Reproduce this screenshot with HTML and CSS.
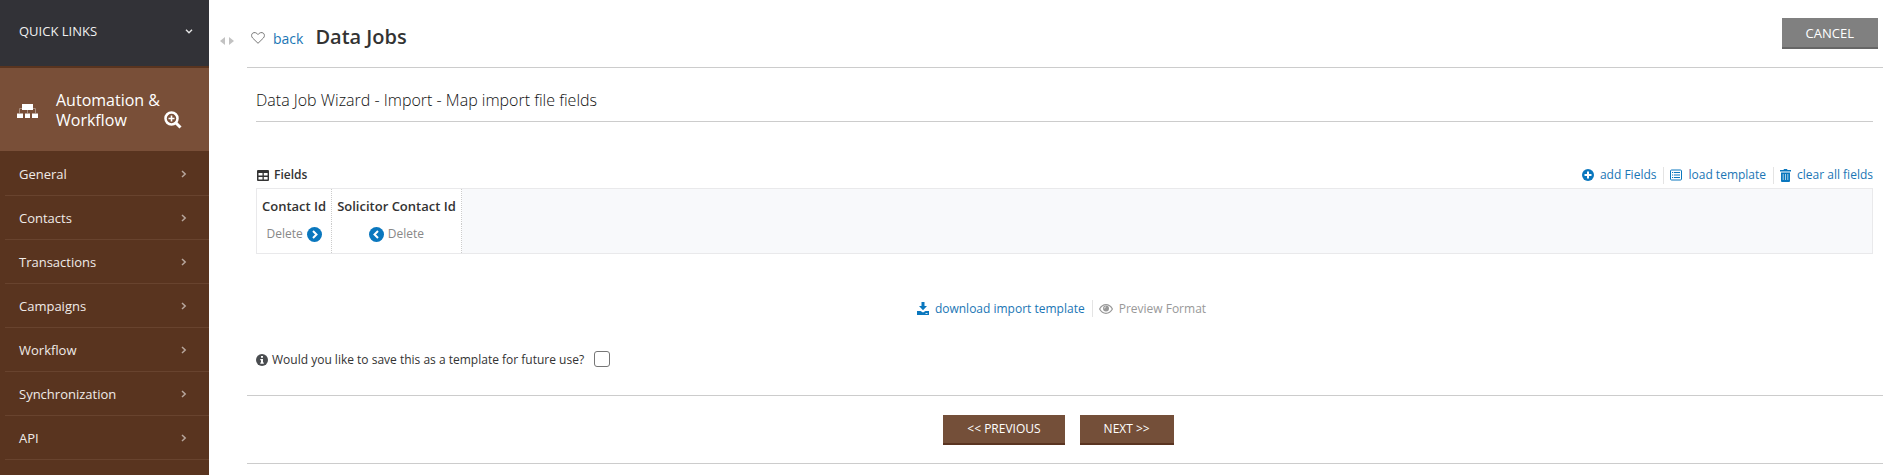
FILE: index.html
```html
<!DOCTYPE html>
<html lang="en">
<head>
<meta charset="utf-8">
<meta name="viewport" content="width=device-width, initial-scale=1">
<title>Data Jobs</title>
<link rel="stylesheet" href="styles.css">
</head>
<body>
<div class="app">
  <aside class="sidebar">
    <button class="quick-links" type="button">QUICK LINKS
      <svg width="8" height="5" viewBox="0 0 8 5"><path d="M1 .8 4 3.8 7 .8" fill="none" stroke="#e4e4e4" stroke-width="1.4"/></svg>
    </button>
    <div class="section">
      <svg class="section-icon" width="21" height="14" viewBox="0 0 21 14"><path d="M2.500 9V4.500h16V9M10.500 5v4" fill="none" stroke="#a98f80" stroke-width="1"/><path d="M5 0h11v6H5zM0 9.500h6V14H0zM8 9.500h5V14H8zM15 9.500h6V14h-6z" fill="#fff"/></svg>
      <span class="section-name">Automation &amp; Workflow</span>
      <button class="search" type="button" aria-label="Search"><svg width="18" height="18" viewBox="0 0 18 18"><path d="m11.500 11.500 5 5" stroke="#fff" stroke-width="3"/><circle cx="7.500" cy="7.500" r="6" fill="none" stroke="#fff" stroke-width="2.500"/><path d="M7.500 4.500v6M4.500 7.500h6" stroke="#fff" stroke-width="1.600"/></svg></button>
    </div>
    <nav class="menu">
      <a href="#">General<svg class="chev" viewBox="0 0 6 8"><path d="m1 1 3.200 3L1 7"/></svg></a>
      <a href="#">Contacts<svg class="chev" viewBox="0 0 6 8"><path d="m1 1 3.200 3L1 7"/></svg></a>
      <a href="#">Transactions<svg class="chev" viewBox="0 0 6 8"><path d="m1 1 3.200 3L1 7"/></svg></a>
      <a href="#">Campaigns<svg class="chev" viewBox="0 0 6 8"><path d="m1 1 3.200 3L1 7"/></svg></a>
      <a href="#">Workflow<svg class="chev" viewBox="0 0 6 8"><path d="m1 1 3.200 3L1 7"/></svg></a>
      <a href="#">Synchronization<svg class="chev" viewBox="0 0 6 8"><path d="m1 1 3.200 3L1 7"/></svg></a>
      <a href="#">API<svg class="chev" viewBox="0 0 6 8"><path d="m1 1 3.200 3L1 7"/></svg></a>
    </nav>
  </aside>
  <button class="collapse" type="button" aria-label="Resize menu"><svg width="14" height="8" viewBox="0 0 14 8"><path d="M5 0v8L0 4zM9 0v8l5-4z" fill="#c2c2c2"/></svg></button>
  <main class="main">
    <header class="page-head">
      <button class="fav" type="button" aria-label="Favourite"><svg width="14" height="12" viewBox="0 0 14 12"><path d="M7 11.300 1.600 6C.2 4.500.3 2.300 1.600 1.200 3.200 0 5.600.5 7 2.600 8.400.5 10.800 0 12.400 1.200c1.300 1.100 1.400 3.300 0 4.800z" fill="none" stroke="#777" stroke-width="1"/></svg></button>
      <a class="back" href="#">back</a>
      <h1>Data Jobs</h1>
      <button class="btn btn-cancel" type="button">CANCEL</button>
    </header>
    <div class="content">
      <h2>Data Job Wizard - Import - Map import file fields</h2>
      <div class="fields-bar">
        <span class="fields-label"><svg width="12" height="11" viewBox="0 0 12 11"><path fill-rule="evenodd" d="M1 0h10q1 0 1 1v9q0 1-1 1H1q-1 0-1-1V1q0-1 1-1zM1.500 3v2.500h4V3zM6.800 3v2.500h3.800V3zM1.500 7v2.500h4V7zM6.800 7v2.500h3.800V7z" fill="#333"/></svg>Fields</span>
        <div class="actions">
          <a href="#"><svg width="12" height="12" viewBox="0 0 12 12"><circle cx="6" cy="6" r="6" fill="#0a77be"/><path d="M6 2.500v7M2.500 6h7" stroke="#fff" stroke-width="2"/></svg>add Fields</a>
          <a href="#"><svg width="12" height="12" viewBox="0 0 12 12"><rect x=".5" y="1" width="11" height="10" rx="1" fill="#fff" stroke="#0a77be"/><path d="M2 3.500h1.200M4 3.500h6M2 6h1.200M4 6h6M2 8.500h1.200M4 8.500h6" stroke="#0a77be" stroke-width="1.200"/></svg>load template</a>
          <a href="#"><svg width="11" height="13" viewBox="0 0 11 13"><path d="M0 1h3.500l.5-1h3l.5 1H11v1.500H0zM1 3.500h9V12q0 1-1 1H2q-1 0-1-1z" fill="#0a77be"/><path d="M3.200 5v6M5.500 5v6M7.800 5v6" stroke="#b9d9ec" stroke-width=".9"/></svg>clear all fields</a>
        </div>
      </div>
      <div class="fields-box">
        <table class="fields">
          <thead><tr><th scope="col">Contact Id</th><th scope="col">Solicitor Contact Id</th></tr></thead>
          <tbody><tr>
            <td><div class="cell"><button type="button">Delete</button><button type="button" aria-label="Move right"><svg width="15" height="15" viewBox="0 0 15 15"><circle cx="7.500" cy="7.500" r="7.500" fill="#0a77be"/><path d="m6 4 3.500 3.500L6 11" fill="none" stroke="#fff" stroke-width="2"/></svg></button></div></td>
            <td><div class="cell"><button type="button" aria-label="Move left"><svg width="15" height="15" viewBox="0 0 15 15"><circle cx="7.500" cy="7.500" r="7.500" fill="#0a77be"/><path d="M9 4 5.500 7.500 9 11" fill="none" stroke="#fff" stroke-width="2"/></svg></button><button type="button">Delete</button></div></td>
          </tr></tbody>
        </table>
      </div>
      <div class="actions template-actions">
        <a href="#"><svg width="12" height="13" viewBox="0 0 12 13"><path d="M4.500 0h3v4H10L6 8.300 2 4h2.500z" fill="#0a77be"/><path d="M0 9h3.500L6 10.500 8.500 9H12v4H0z" fill="#0a77be"/><path d="M8.500 11.500h2" stroke="#fff" stroke-width=".8"/></svg>download import template</a>
        <a class="muted" href="#"><svg width="14" height="10" viewBox="0 0 14 10"><path d="M.6 5Q3 .7 7 .7T13.400 5Q11 9.300 7 9.300T.6 5z" fill="none" stroke="#999" stroke-width="1.200"/><circle cx="7" cy="4.500" r="3" fill="#999"/><path d="M5.300 4.500Q5.300 3 7 2.800" fill="none" stroke="#fff" stroke-width=".7"/></svg>Preview Format</a>
      </div>
      <div class="save-row">
        <svg width="12" height="12" viewBox="0 0 12 12"><circle cx="6" cy="6" r="6" fill="#4a4d50"/><path d="M5 2h2v1.700H5zM4.300 5H7v3.500h.8v1.200H4.300V8.500H5V6.200h-.7z" fill="#fff"/></svg>
        <label for="save">Would you like to save this as a template for future use?</label>
        <input id="save" type="checkbox">
      </div>
    </div>
    <footer class="wizard-nav">
      <button class="btn" type="button">&lt;&lt; PREVIOUS</button>
      <button class="btn" type="button">NEXT &gt;&gt;</button>
    </footer>
  </main>
</div>
</body>
</html>
```
FILE: styles.css
```css
* { box-sizing: border-box; }
body { margin: 0; background: #fff; color: #333; font: 12px/18px "Open Sans", "Noto Sans", sans-serif; }
a { color: #1a76b5; text-decoration: none; }
button { margin: 0; padding: 0; border: 0; background: none; color: inherit; font: inherit; cursor: pointer; }
svg { display: block; flex: none; }
h1, h2 { margin: 0; }

.app { display: flex; min-height: 100vh; }

.sidebar { flex: none; width: 209px; height: 100vh; overflow: hidden; background: #59341f; color: #fff; font-size: 13px; }
.quick-links { display: flex; align-items: center; justify-content: space-between; width: 100%; height: 66px; padding: 0 16px 4px 19px; background: #323237; color: #f0f0f0; }
.section { display: flex; align-items: center; height: 83px; margin-top: 2px; padding: 0 27px 0 17px; background: #794f38; }
.section-icon { margin-top: 2px; }
.section-name { flex: 1; margin-left: 18px; font-size: 16px; line-height: 20px; }
.search { align-self: flex-end; margin: 0 0 22px -12px; }
.menu a { display: flex; align-items: center; justify-content: space-between; height: 44px; margin-left: 5px; padding: 1px 22px 0 14px; border-bottom: 1px solid #68432e; color: #f0ebe8; }
.menu a:first-child { height: 45px; padding-top: 2px; }
.chev { width: 6px; height: 8px; }
.chev path { fill: none; stroke: #b7a69c; stroke-width: 1.5; }

.collapse { flex: none; align-self: flex-start; width: 38px; padding: 37px 0 0 11px; }
.main { flex: 1; min-width: 0; padding-right: 12px; }

.page-head { display: flex; align-items: center; height: 68px; padding: 8px 5px 0 4px; border-bottom: 1px solid #ccc; }
.back { margin: 2px 12px 0 8px; font-size: 14px; }
.page-head h1 { margin-bottom: 2px; font-size: 20px; font-weight: 600; line-height: 28px; }
.btn { height: 30px; padding: 0 24px; border-bottom: 2px solid #5a3421; background: #744f39; color: #fff; }
.btn-cancel { height: 31px; margin: 0 0 8px auto; border-color: #666; background: #808080; font-size: 13px; }

.content { padding: 0 10px 0 9px; }
.content h2 { padding: 25px 0 13px; border-bottom: 1px solid #ccc; color: #111; font-size: 16px; font-weight: 300; line-height: 15px; }
.fields-bar { display: flex; align-items: center; justify-content: space-between; margin-top: 45px; height: 16px; }
.fields-label { display: flex; align-items: center; gap: 5px; padding-left: 1px; font-weight: 600; }
.actions { display: flex; align-items: center; }
.actions a { display: flex; align-items: center; gap: 6px; height: 17px; }
.actions a + a { margin-left: 7px; padding-left: 6px; border-left: 1px solid #e4e4e4; }
.actions .muted { color: #999; }

.fields-box { margin-top: 5px; border: 1px solid #e9e9eb; background: #f8f9fb; }
.fields { border-collapse: collapse; background: #fff; }
.fields th, .fields td { padding: 0 5px; border-right: 1px dotted #ccc; }
.fields th { height: 35px; padding-bottom: 2px; font-size: 13px; font-weight: 600; }
.fields td { height: 29px; padding-bottom: 9px; color: #888; }
.cell { display: flex; align-items: center; justify-content: center; gap: 4px; }

.template-actions { justify-content: center; margin-top: 46px; padding-right: 6px; }
.save-row { display: flex; align-items: center; gap: 4px; margin-top: 34px; }
.save-row input { appearance: none; width: 16px; height: 16px; margin: 0 0 2px 6px; border: 1px solid #767676; border-radius: 3px; background: #fff; }

.wizard-nav { display: flex; justify-content: center; gap: 15px; margin-top: 26px; padding: 19px 13px 18px 0; border: solid #ccc; border-width: 1px 0; }
```
